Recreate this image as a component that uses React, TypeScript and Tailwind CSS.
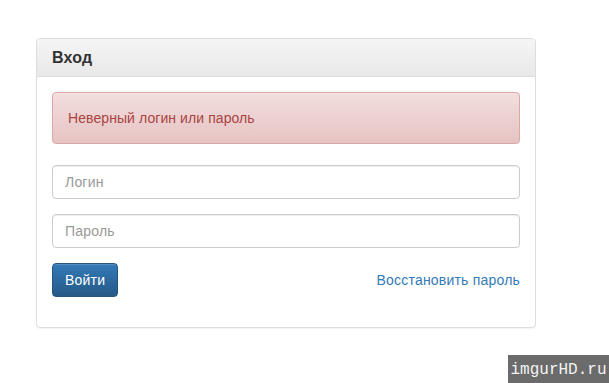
import React from "react";

export default function App() {
  return (
    <div
      className="relative h-[383px] w-[609px] overflow-hidden bg-white pl-[36px] pt-[38px] tracking-[0.2px]"
      style={{ fontFamily: '"Liberation Sans", Arial, sans-serif' }}
    >
      <div className="w-[500px] rounded-[4px] border border-[#dddddd] bg-white shadow-[0_1px_1px_rgba(0,0,0,0.05)]">
        <div className="rounded-t-[3px] border-b border-[#dddddd] bg-gradient-to-b from-[#f5f5f5] to-[#e8e8e8] px-[15px] py-[9px]">
          <h3 className="text-[16px] leading-[19px] font-bold text-[#333333]">Вход</h3>
        </div>

        <div className="p-[15px]">
          <div className="mb-[21px] rounded-[4px] border border-[#dca7a7] bg-gradient-to-b from-[#f2dede] to-[#e7c3c3] p-[15px] text-[14px] leading-[20px] tracking-[0.08px] text-[#a94442] shadow-[inset_0_1px_0_rgba(255,255,255,0.25)]">
            Неверный логин или пароль
          </div>

          <form className="flex flex-col gap-[15px]" onSubmit={(e) => e.preventDefault()}>
            <input
              type="text"
              placeholder="Логин"
              className="h-[34px] w-full rounded-[4px] border border-[#cccccc] px-[12px] text-[14px] text-[#555555] shadow-[inset_0_1px_1px_rgba(0,0,0,0.075)] outline-none placeholder:text-[#999999]"
            />
            <input
              type="password"
              placeholder="Пароль"
              className="h-[34px] w-full rounded-[4px] border border-[#cccccc] px-[12px] text-[14px] text-[#555555] shadow-[inset_0_1px_1px_rgba(0,0,0,0.075)] outline-none placeholder:text-[#999999]"
            />
            <div className="mb-[15px] flex items-center justify-between">
              <button
                type="submit"
                className="h-[34px] rounded-[4px] border border-[#245580] bg-gradient-to-b from-[#337ab7] to-[#265a88] px-[12px] text-[14px] text-white shadow-[inset_0_1px_0_rgba(255,255,255,0.15)]"
              >
                Войти
              </button>
              <a href="#" className="text-[14px] text-[#337ab7]">
                Восстановить пароль
              </a>
            </div>
          </form>
        </div>
      </div>

      <div
        className="absolute right-0 bottom-0 flex h-[28px] w-[101px] items-center justify-center bg-[#6b6b6b] pt-[1px] text-[16px] tracking-normal text-[#f4f4f4]"
        style={{ fontFamily: '"Liberation Mono", "DejaVu Sans Mono", monospace' }}
      >
        imgurHD.ru
      </div>
    </div>
  );
}
